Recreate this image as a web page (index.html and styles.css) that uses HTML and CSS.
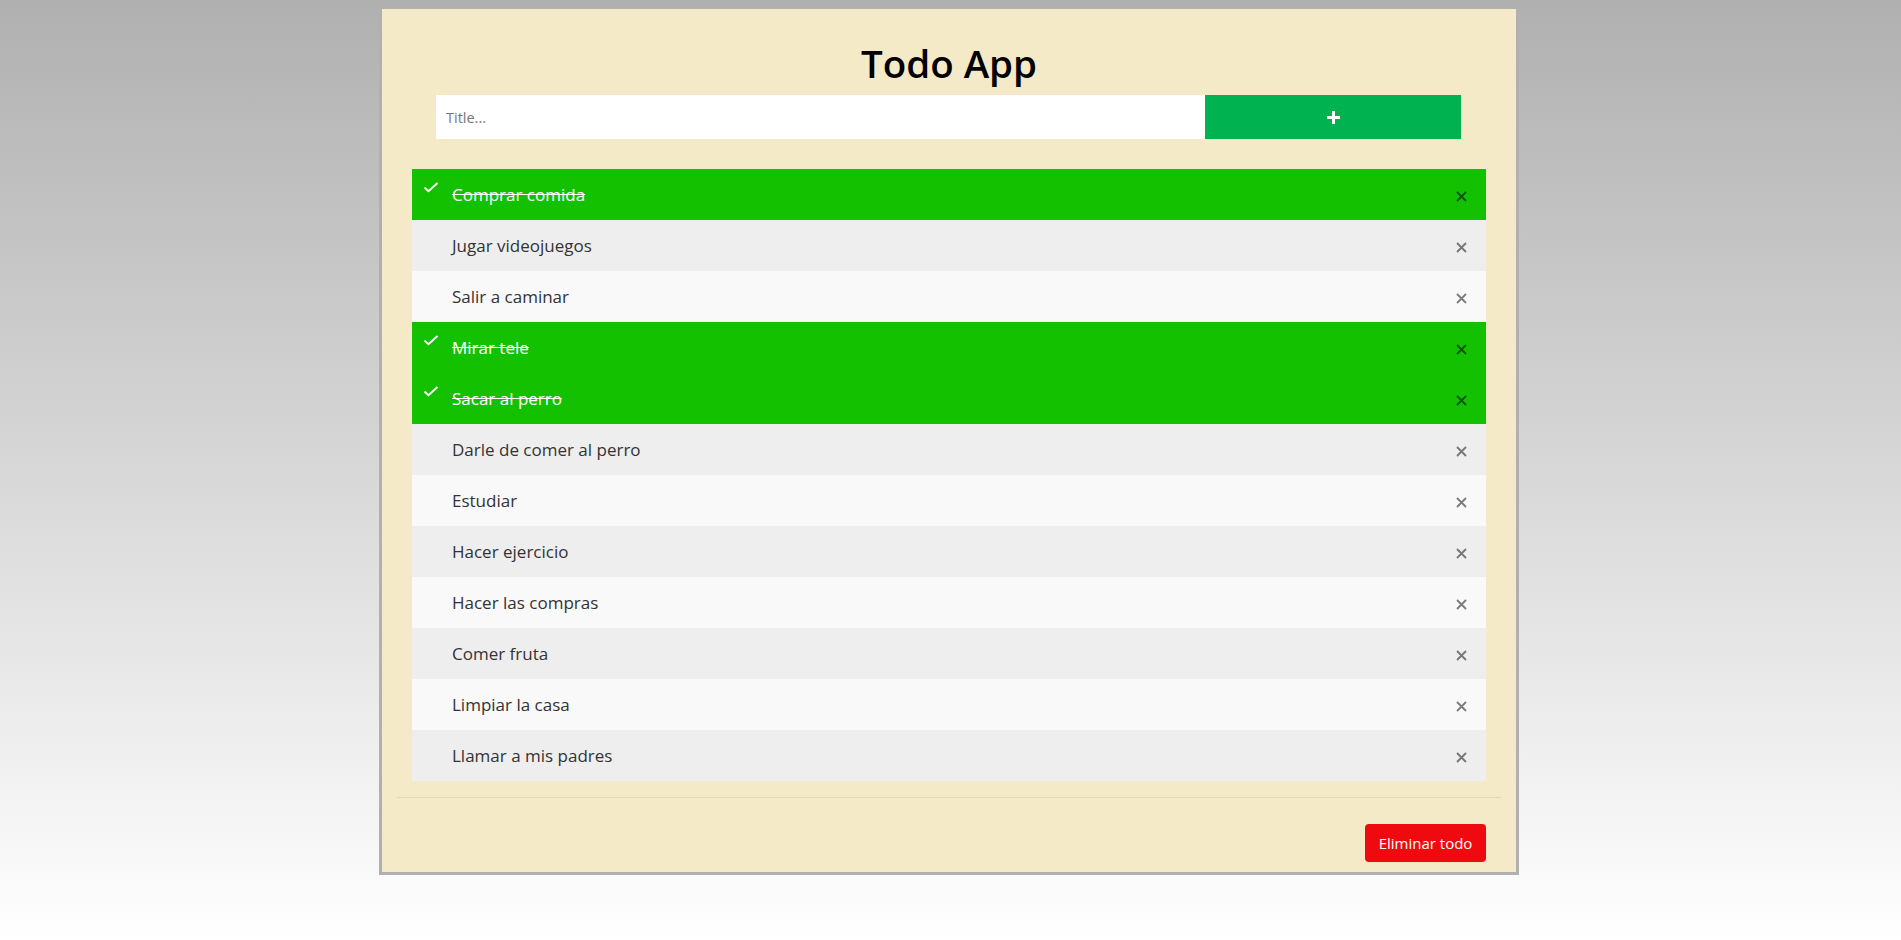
FILE: index.html
```html
<!DOCTYPE html>
<html lang="es">
<head>
<meta charset="utf-8">
<title>Todo App</title>
<link rel="stylesheet" href="styles.css">
</head>
<body>
<main class="card">
  <h1 class="title">Todo App</h1>
  <form class="add-form">
    <input class="add-input" type="text" placeholder="Title...">
    <button class="add-btn" type="button" aria-label="Agregar">
      <svg width="13" height="13" viewBox="0 0 13 13"><rect x="5" y="0" width="3" height="13" fill="#fff"/><rect x="0" y="5" width="13" height="3" fill="#fff"/></svg>
    </button>
  </form>
  <ul class="todo-list">
    <li class="todo done"><svg class="check" width="16" height="11" viewBox="0 0 16 11"><polyline points="1.5,5.5 5.5,9.2 14.5,1" fill="none" stroke="#fff" stroke-width="2"/></svg><span class="text">Comprar comida</span><span class="close"><svg width="11" height="11" viewBox="0 0 11 11"><path d="M1 1L10 10M10 1L1 10" stroke="currentColor" stroke-width="1.8"/></svg></span></li>
    <li class="todo"><span class="text">Jugar videojuegos</span><span class="close"><svg width="11" height="11" viewBox="0 0 11 11"><path d="M1 1L10 10M10 1L1 10" stroke="currentColor" stroke-width="1.8"/></svg></span></li>
    <li class="todo"><span class="text">Salir a caminar</span><span class="close"><svg width="11" height="11" viewBox="0 0 11 11"><path d="M1 1L10 10M10 1L1 10" stroke="currentColor" stroke-width="1.8"/></svg></span></li>
    <li class="todo done"><svg class="check" width="16" height="11" viewBox="0 0 16 11"><polyline points="1.5,5.5 5.5,9.2 14.5,1" fill="none" stroke="#fff" stroke-width="2"/></svg><span class="text">Mirar tele</span><span class="close"><svg width="11" height="11" viewBox="0 0 11 11"><path d="M1 1L10 10M10 1L1 10" stroke="currentColor" stroke-width="1.8"/></svg></span></li>
    <li class="todo done"><svg class="check" width="16" height="11" viewBox="0 0 16 11"><polyline points="1.5,5.5 5.5,9.2 14.5,1" fill="none" stroke="#fff" stroke-width="2"/></svg><span class="text">Sacar al perro</span><span class="close"><svg width="11" height="11" viewBox="0 0 11 11"><path d="M1 1L10 10M10 1L1 10" stroke="currentColor" stroke-width="1.8"/></svg></span></li>
    <li class="todo"><span class="text">Darle de comer al perro</span><span class="close"><svg width="11" height="11" viewBox="0 0 11 11"><path d="M1 1L10 10M10 1L1 10" stroke="currentColor" stroke-width="1.8"/></svg></span></li>
    <li class="todo"><span class="text">Estudiar</span><span class="close"><svg width="11" height="11" viewBox="0 0 11 11"><path d="M1 1L10 10M10 1L1 10" stroke="currentColor" stroke-width="1.8"/></svg></span></li>
    <li class="todo"><span class="text">Hacer ejercicio</span><span class="close"><svg width="11" height="11" viewBox="0 0 11 11"><path d="M1 1L10 10M10 1L1 10" stroke="currentColor" stroke-width="1.8"/></svg></span></li>
    <li class="todo"><span class="text">Hacer las compras</span><span class="close"><svg width="11" height="11" viewBox="0 0 11 11"><path d="M1 1L10 10M10 1L1 10" stroke="currentColor" stroke-width="1.8"/></svg></span></li>
    <li class="todo"><span class="text">Comer fruta</span><span class="close"><svg width="11" height="11" viewBox="0 0 11 11"><path d="M1 1L10 10M10 1L1 10" stroke="currentColor" stroke-width="1.8"/></svg></span></li>
    <li class="todo"><span class="text">Limpiar la casa</span><span class="close"><svg width="11" height="11" viewBox="0 0 11 11"><path d="M1 1L10 10M10 1L1 10" stroke="currentColor" stroke-width="1.8"/></svg></span></li>
    <li class="todo"><span class="text">Llamar a mis padres</span><span class="close"><svg width="11" height="11" viewBox="0 0 11 11"><path d="M1 1L10 10M10 1L1 10" stroke="currentColor" stroke-width="1.8"/></svg></span></li>
  </ul>
  <hr class="divider">
  <div class="footer">
    <button class="clear-btn" type="button">Eliminar todo</button>
  </div>
</main>
</body>
</html>
```
FILE: styles.css
```css
* {
  box-sizing: border-box;
}

html, body {
  height: 100%;
}

body {
  margin: 0;
  padding: 6px 3px 0 0;
  background: linear-gradient(to bottom, #b0b0b0 0%, #ffffff 100%);
  font-family: "Open Sans", "Noto Sans", sans-serif;
  color: #333;
}

.card {
  width: 1140px;
  margin: 0 auto;
  background: #f5eac8;
  border: 3px solid #b0b0b0;
  padding: 31px 0 10px;
}

.title {
  margin: 0 0 9px;
  text-align: center;
  font-size: 38.5px;
  line-height: 46px;
  font-weight: 600;
  color: #000;
}

.add-form {
  display: flex;
  height: 44px;
  margin: 0 55px 0 54px;
}

.add-input {
  flex: 1;
  border: none;
  outline: none;
  background: #fff;
  padding: 0 10px;
  font-family: inherit;
  font-size: 14.5px;
  color: #333;
}

.add-input::placeholder {
  color: #777;
}

.add-btn {
  width: 256px;
  border: none;
  background: #00b350;
  display: flex;
  align-items: center;
  justify-content: center;
  padding: 0;
}

.todo-list {
  list-style: none;
  margin: 30px 30px 0;
  padding: 0;
}

.todo {
  position: relative;
  display: flex;
  align-items: center;
  height: 51px;
  padding-left: 40px;
  background: #eeeeee;
  font-size: 17px;
  color: #333;
}

.todo:nth-child(odd) {
  background: #f9f9f9;
}

.todo.done {
  background: #13c100;
  color: #fff;
}

.todo.done .text {
  text-decoration: line-through;
}

.check {
  position: absolute;
  left: 11px;
  top: 13px;
}

.text {
  flex: 1;
}

.close {
  width: 50px;
  display: flex;
  align-items: center;
  justify-content: center;
  padding-top: 3px;
  color: #000;
  opacity: 0.5;
}

.todo.done .close {
  opacity: 0.55;
}

.divider {
  margin: 16px 15px 0;
  border: none;
  border-top: 1px solid #e1d7b5;
  height: 0;
}

.footer {
  display: flex;
  justify-content: flex-end;
  padding: 26px 30px 0;
}

.clear-btn {
  width: 121px;
  height: 38px;
  border: none;
  border-radius: 4px;
  background: #ee0a0e;
  color: #fff;
  font-family: inherit;
  font-size: 15px;
  padding: 0;
}
```
